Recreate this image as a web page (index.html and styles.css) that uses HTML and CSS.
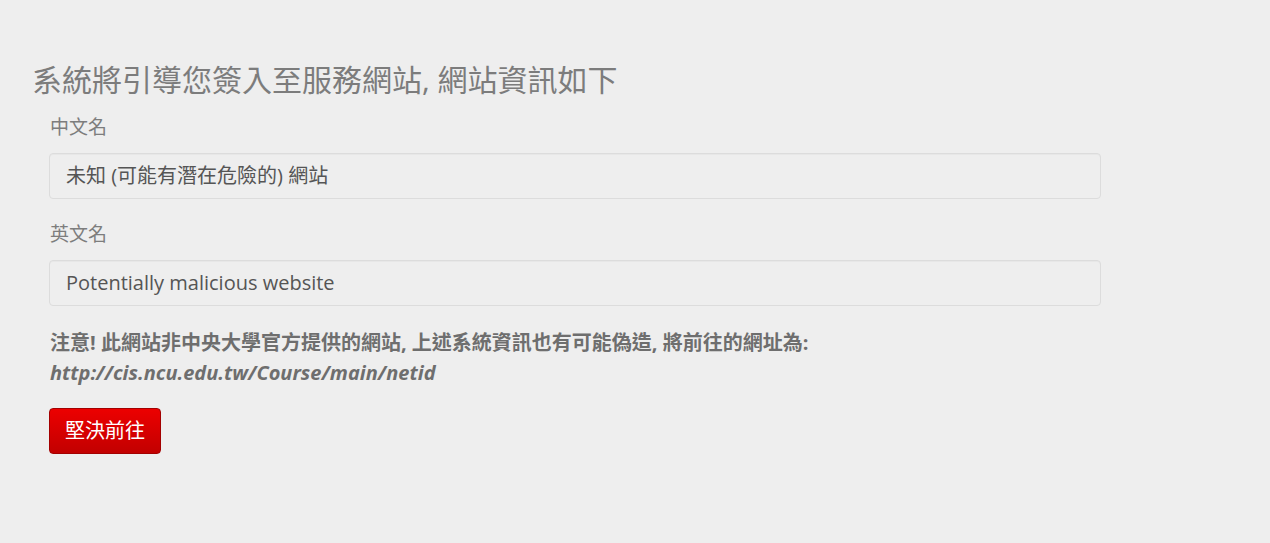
FILE: index.html
```html
<!DOCTYPE html>
<html lang="zh-Hant">
<head>
<meta charset="utf-8">
<title>NetID</title>
<link rel="stylesheet" href="styles.css">
</head>
<body>
<div class="page">
  <h3 class="title">系統將引導您簽入至服務網站, 網站資訊如下</h3>
  <div class="form">
    <div class="group">
      <label class="label">中文名</label>
      <div class="field">未知 (可能有潛在危險的) 網站</div>
    </div>
    <div class="group">
      <label class="label">英文名</label>
      <div class="field">Potentially malicious website</div>
    </div>
    <p class="warning">注意! 此網站非中央大學官方提供的網站, 上述系統資訊也有可能偽造, 將前往的網址為:<br><em class="url">http://cis.ncu.edu.tw/Course/main/netid</em></p>
    <button class="btn" type="button">堅決前往</button>
  </div>
</div>
</body>
</html>
```

FILE: styles.css
```css
* { box-sizing: border-box; }
html, body { margin: 0; padding: 0; }
body {
  background: #eeeeee;
  font-family: "Open Sans", "Noto Sans CJK TC", sans-serif;
  color: #555555;
  height: 543px;
}
.page {
  padding: 62px 0 0 32px;
}
.title {
  margin: 0;
  font-size: 30px;
  font-weight: 400;
  line-height: 36px;
  color: #7c7c7c;
}
.form {
  padding-left: 17px;
  width: 1069px;
  margin-top: 16px;
}
.group {
  margin-bottom: 22px;
}
.label {
  display: block;
  font-size: 19px;
  line-height: 26px;
  color: #7d7d7d;
  padding-left: 1px;
  margin-bottom: 13px;
}
.field {
  height: 46px;
  border: 1px solid #dcdcdc;
  border-radius: 4px;
  background: #eeeeee;
  padding: 0 16px;
  font-size: 20px;
  line-height: 44px;
  color: #555555;
  box-shadow: inset 0 1px 1px rgba(0,0,0,0.03);
}
.warning {
  margin: 0 0 20px 0;
  padding-left: 1px;
  font-size: 20px;
  font-weight: 700;
  line-height: 30px;
  color: #6e6e6e;
}
.url {
  font-style: italic;
  font-weight: 700;
}
.btn {
  display: block;
  height: 46px;
  padding: 0 15px;
  border: 1px solid #a30000;
  border-radius: 4px;
  background: linear-gradient(#ec0000, #c20000);
  color: #ffffff;
  font-family: "Open Sans", "Noto Sans CJK TC", sans-serif;
  font-size: 20px;
  line-height: 44px;
  cursor: pointer;
}
```
